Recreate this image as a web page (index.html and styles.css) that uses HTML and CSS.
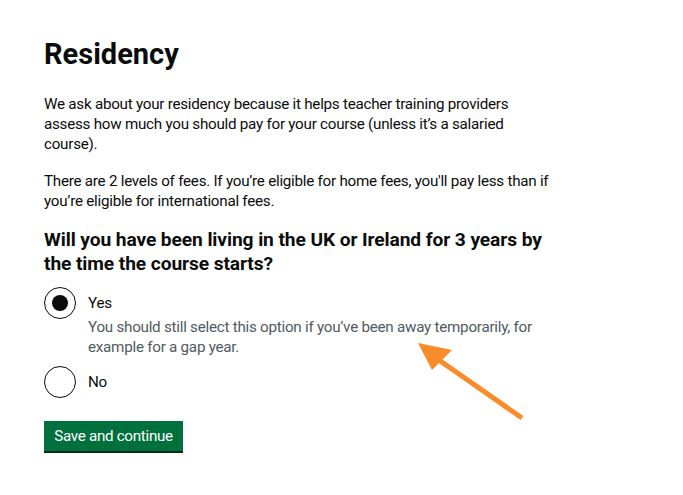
FILE: index.html
```html
<!DOCTYPE html>
<html lang="en">
<head>
<meta charset="utf-8">
<title>Residency</title>
<link rel="stylesheet" href="styles.css">
</head>
<body>
<main class="page">
  <h1 class="heading-l">Residency</h1>
  <p class="body">We ask about your residency because it helps teacher training providers assess how much you should pay for your course (unless it’s a salaried course).</p>
  <p class="body">There are 2 levels of fees. If you’re eligible for home fees, you'll pay less than if you’re eligible for international fees.</p>
  <fieldset class="fieldset">
    <legend class="heading-m">Will you have been living in the UK or Ireland for 3 years by the time the course starts?</legend>
    <div class="radios">
      <div class="radio">
        <span class="radio-input checked"></span>
        <div class="radio-text">
          <span class="radio-label">Yes</span>
          <span class="radio-hint">You should still select this option if you’ve been away temporarily, for example for a gap year.</span>
        </div>
      </div>
      <div class="radio">
        <span class="radio-input"></span>
        <div class="radio-text">
          <span class="radio-label">No</span>
        </div>
      </div>
    </div>
  </fieldset>
  <button class="button" type="button">Save and continue</button>
</main>
<svg class="annotation" width="140" height="100" viewBox="0 0 140 100" aria-hidden="true">
  <line x1="116" y1="88" x2="30" y2="28" stroke="#f98b2b" stroke-width="5" stroke-linecap="butt"/>
  <polygon points="12,13 46,20 26,40" fill="#f98b2b"/>
</svg>
</body>
</html>
```
FILE: styles.css
```css
* { box-sizing: border-box; }
html, body { margin: 0; padding: 0; background: #fff; }
body {
  font-family: Roboto, "Liberation Sans", Arial, sans-serif;
  color: #0b0c0c;
  position: relative;
  min-height: 495px;
}
.page {
  padding: 38px 44px 0 44px;
  width: 594px;
}
.heading-l {
  font-size: 29px;
  line-height: 32px;
  font-weight: 700;
  margin: 0 0 24px 0;
}
.body {
  font-size: 15.2px;
  line-height: 20px;
  letter-spacing: -0.25px;
  margin: 0 0 17px 0;
}
.fieldset {
  border: 0;
  margin: 0;
  padding: 0;
  min-width: 0;
}
.heading-m {
  font-size: 19.2px;
  line-height: 24px;
  font-weight: 700;
  letter-spacing: -0.1px;
  padding: 0;
  margin: 1px 0 11px 0;
}
.radios {
  display: flex;
  flex-direction: column;
  gap: 9px;
}
.radio {
  display: flex;
  align-items: flex-start;
  gap: 12px;
}
.radio-input {
  flex: none;
  width: 32px;
  height: 32px;
  border: 1.6px solid #0b0c0c;
  border-radius: 50%;
  display: flex;
  align-items: center;
  justify-content: center;
}
.radio-input.checked::after {
  content: "";
  width: 16px;
  height: 16px;
  border-radius: 50%;
  background: #0b0c0c;
}
.radio-text {
  display: flex;
  flex-direction: column;
  padding-top: 6px;
}
.radio-label {
  font-size: 15.2px;
  line-height: 20px;
  letter-spacing: -0.25px;
}
.radio-hint {
  font-size: 15.2px;
  line-height: 20px;
  letter-spacing: -0.25px;
  color: #505a5f;
  margin-top: 4px;
}
.button {
  display: block;
  margin-top: 23px;
  width: 139px;
  height: 30px;
  background: #00703c;
  color: #fff;
  border: 0;
  border-radius: 0;
  box-shadow: 0 2px 0 #002d18;
  font-family: inherit;
  font-size: 15.2px;
  letter-spacing: -0.3px;
  line-height: 30px;
  padding: 0;
  text-align: center;
  cursor: pointer;
}
.annotation {
  position: absolute;
  left: 406px;
  top: 330px;
}
```
